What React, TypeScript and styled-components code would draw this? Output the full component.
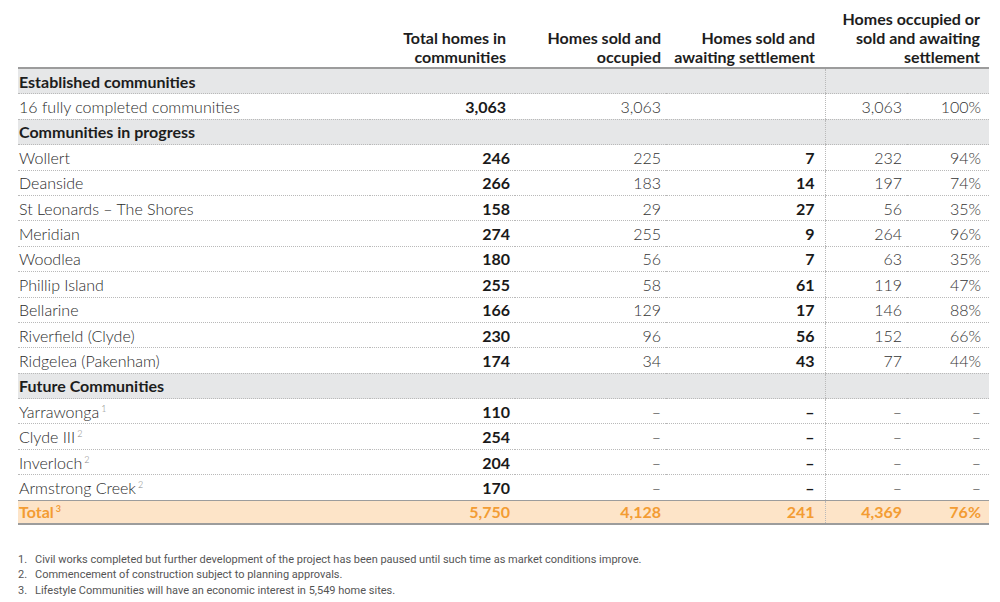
import React from 'react'
import styled, { createGlobalStyle } from 'styled-components'

const GlobalStyle = createGlobalStyle`
  body {
    margin: 0;
    background: #ffffff;
    font-family: Lato, "Open Sans", sans-serif;
    color: #222;
  }
`

const Page = styled.div`
  width: 1000px;
  height: 602px;
  padding: 9px 11px 0 18px;
  box-sizing: border-box;
`

const Table = styled.table`
  width: 971px;
  border-collapse: collapse;
  table-layout: fixed;
`

const HeadCell = styled.th<{ $pad?: number }>`
  text-align: right;
  vertical-align: bottom;
  font-size: 16px;
  font-weight: 700;
  line-height: 19px;
  color: #1d1d1d;
  padding: 0 ${(p) => p.$pad ?? 5}px 1px 0;
  border-bottom: 2px solid #9c9c9c;
`

const SectionRow = styled.tr`
  background: #e6e7e8;
  td {
    height: 24.4px;
    padding: 0;
    border-bottom: 1px dotted #b9b9b9;
  }
`

const SectionTitle = styled.td`
  font-size: 16px;
  font-weight: 700;
  color: #1d1d1d;
  padding-left: 1px !important;
`

const BodyRow = styled.tr<{ $last?: boolean }>`
  td {
    height: 24.4px;
    padding: 0;
    border-bottom: 1px ${(p) => (p.$last ? 'solid #9c9c9c' : 'dotted #b9b9b9')};
  }
`

const NameCell = styled.td`
  font-size: 16px;
  font-weight: 300;
  color: #2a2a2a;
  padding-left: 1px !important;
  white-space: nowrap;
`

const Sup = styled.sup`
  font-size: 9px;
  color: #888;
  vertical-align: 6px;
  margin-left: 2px;
`

const NumCell = styled.td<{ $bold?: boolean; $pad?: number; $divider?: boolean }>`
  text-align: right;
  font-size: 16px;
  font-weight: ${(p) => (p.$bold ? 700 : 300)};
  color: ${(p) => (p.$bold ? '#1a1a1a' : '#333')};
  padding-right: ${(p) => p.$pad ?? 5}px !important;
  border-left: ${(p) => (p.$divider ? '1px dotted #b9b9b9' : 'none')};
`

const TotalRow = styled.tr`
  background: #fde4c8;
  td {
    height: 22px;
    padding: 0;
    border-bottom: 2px solid #9c9c9c;
    color: #f39c33;
    font-weight: 700;
    font-size: 16px;
  }
  sup {
    color: #f39c33;
  }
`

const TotalCell = styled.td<{ $pad?: number; $divider?: boolean }>`
  text-align: right;
  padding-right: ${(p) => p.$pad ?? 5}px !important;
  border-left: ${(p) => (p.$divider ? '1px dotted #b9b9b9' : 'none')};
`

const Notes = styled.ol`
  margin: 27px 0 0;
  padding: 0;
  list-style: none;
  font-family: Roboto, "Liberation Sans", sans-serif;
  font-size: 11px;
  color: #555;
  line-height: 15.5px;
`

const Note = styled.li`
  display: flex;
  span:first-child {
    width: 17px;
  }
`

type Row = {
  name: string
  note?: string
  total: string
  occupied: string
  awaiting: string
  combined: string
  pct: string
}

const progress: Row[] = [
  { name: 'Wollert', total: '246', occupied: '225', awaiting: '7', combined: '232', pct: '94%' },
  { name: 'Deanside', total: '266', occupied: '183', awaiting: '14', combined: '197', pct: '74%' },
  { name: 'St Leonards – The Shores', total: '158', occupied: '29', awaiting: '27', combined: '56', pct: '35%' },
  { name: 'Meridian', total: '274', occupied: '255', awaiting: '9', combined: '264', pct: '96%' },
  { name: 'Woodlea', total: '180', occupied: '56', awaiting: '7', combined: '63', pct: '35%' },
  { name: 'Phillip Island', total: '255', occupied: '58', awaiting: '61', combined: '119', pct: '47%' },
  { name: 'Bellarine', total: '166', occupied: '129', awaiting: '17', combined: '146', pct: '88%' },
  { name: 'Riverfield (Clyde)', total: '230', occupied: '96', awaiting: '56', combined: '152', pct: '66%' },
  { name: 'Ridgelea (Pakenham)', total: '174', occupied: '34', awaiting: '43', combined: '77', pct: '44%' },
]

const future: Row[] = [
  { name: 'Yarrawonga', note: '1', total: '110', occupied: '–', awaiting: '–', combined: '–', pct: '–' },
  { name: 'Clyde III', note: '2', total: '254', occupied: '–', awaiting: '–', combined: '–', pct: '–' },
  { name: 'Inverloch', note: '2', total: '204', occupied: '–', awaiting: '–', combined: '–', pct: '–' },
  { name: 'Armstrong Creek', note: '2', total: '170', occupied: '–', awaiting: '–', combined: '–', pct: '–' },
]

function DataRow({ row, last }: { row: Row; last?: boolean }) {
  return (
    <BodyRow $last={last}>
      <NameCell>
        {row.name}
        {row.note && <Sup>{row.note}</Sup>}
      </NameCell>
      <NumCell $bold>{row.total}</NumCell>
      <NumCell>{row.occupied}</NumCell>
      <NumCell $bold $pad={10}>{row.awaiting}</NumCell>
      <NumCell $divider>{row.combined}</NumCell>
      <NumCell $pad={8}>{row.pct}</NumCell>
    </BodyRow>
  )
}

function Section({ title }: { title: string }) {
  return (
    <SectionRow>
      <SectionTitle>{title}</SectionTitle>
      <td />
      <td />
      <td />
      <NumCell $divider />
      <td />
    </SectionRow>
  )
}

export default function App() {
  return (
    <Page>
      <GlobalStyle />
      <Table>
        <colgroup>
          <col style={{ width: 352 }} />
          <col style={{ width: 145 }} />
          <col style={{ width: 151 }} />
          <col style={{ width: 159 }} />
          <col style={{ width: 82 }} />
          <col style={{ width: 82 }} />
        </colgroup>
        <thead>
          <tr>
            <HeadCell />
            <HeadCell $pad={9}>Total homes in<br />communities</HeadCell>
            <HeadCell>Homes sold and<br />occupied</HeadCell>
            <HeadCell $pad={10}>Homes sold and<br />awaiting settlement</HeadCell>
            <HeadCell colSpan={2} $pad={9}>Homes occupied or<br />sold and awaiting<br />settlement</HeadCell>
          </tr>
        </thead>
        <tbody>
          <Section title="Established communities" />
          <BodyRow>
            <NameCell>16 fully completed communities</NameCell>
            <NumCell $bold $pad={9}>3,063</NumCell>
            <NumCell>3,063</NumCell>
            <NumCell $pad={10} />
            <NumCell $divider>3,063</NumCell>
            <NumCell $pad={8}>100%</NumCell>
          </BodyRow>
          <Section title="Communities in progress" />
          {progress.map((r) => (
            <DataRow key={r.name} row={r} />
          ))}
          <Section title="Future Communities" />
          {future.map((r, i) => (
            <DataRow key={r.name} row={r} last={i === future.length - 1} />
          ))}
          <TotalRow>
            <td style={{ paddingLeft: 1 }}>
              Total<Sup>3</Sup>
            </td>
            <TotalCell>5,750</TotalCell>
            <TotalCell>4,128</TotalCell>
            <TotalCell $pad={10}>241</TotalCell>
            <TotalCell $divider>4,369</TotalCell>
            <TotalCell $pad={8}>76%</TotalCell>
          </TotalRow>
        </tbody>
      </Table>
      <Notes>
        <Note>
          <span>1.</span>
          <span>Civil works completed but further development of the project has been paused until such time as market conditions improve.</span>
        </Note>
        <Note>
          <span>2.</span>
          <span>Commencement of construction subject to planning approvals.</span>
        </Note>
        <Note>
          <span>3.</span>
          <span>Lifestyle Communities will have an economic interest in 5,549 home sites.</span>
        </Note>
      </Notes>
    </Page>
  )
}
